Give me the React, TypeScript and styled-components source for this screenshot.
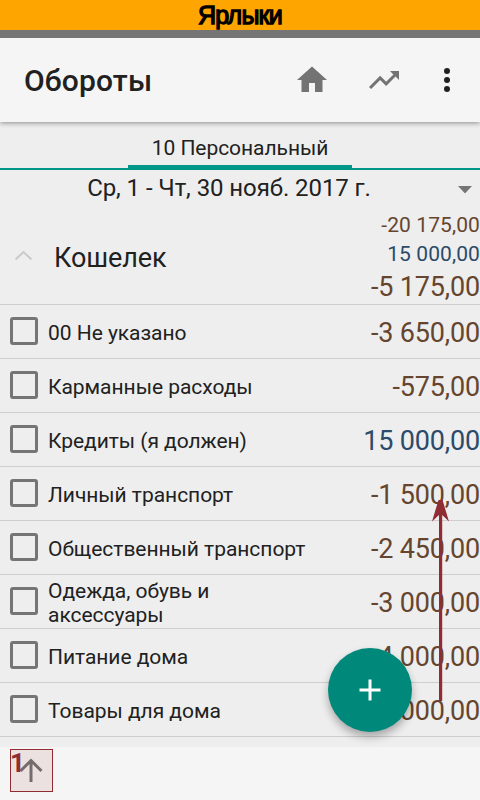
import React from "react";
import styled, { createGlobalStyle } from "styled-components";

const GlobalStyle = createGlobalStyle`
  * { box-sizing: border-box; }
  body { margin: 0; background: #f5f5f5; }
`;

const Screen = styled.div`
  position: relative;
  display: flex;
  flex-direction: column;
  width: 480px;
  height: 800px;
  overflow: hidden;
  background: #f5f5f5;
  color: #212121;
  font-family: Roboto, "Noto Sans", sans-serif;
`;

const Banner = styled.div`
  flex: none;
  height: 30px;
  background: #ffa500;
  color: #000;
  text-align: center;
  font: 25px/31px "Liberation Sans", Arial, sans-serif;
  letter-spacing: -0.8px;
  -webkit-text-stroke: 1.3px #000;
`;

const StatusBar = styled.div`
  flex: none;
  position: relative;
  z-index: 2;
  height: 8px;
  background: #757575;
`;

const Toolbar = styled.header`
  flex: none;
  position: relative;
  z-index: 1;
  display: flex;
  align-items: center;
  height: 84px;
  padding: 0 15px 0 24px;
  background: #f5f5f5;
  box-shadow: 0 1px 5px rgba(0, 0, 0, 0.42);
`;

const Title = styled.h1`
  flex: 1;
  margin: 0;
  padding-top: 1px;
  font-size: 30px;
  line-height: 36px;
  font-weight: 500;
  letter-spacing: 0.15px;
`;

const Action = styled.button<{ $gap?: number }>`
  display: flex;
  padding: 0;
  margin-left: ${(p) => p.$gap ?? 0}px;
  border: 0;
  background: none;
  color: #737373;
`;

const Content = styled.main`
  flex: none;
  height: 625px;
  background: #eeeeee;
`;

const Tabs = styled.nav`
  display: flex;
  justify-content: center;
  height: 48px;
  border-bottom: 2px solid #009688;
`;

const Tab = styled.div`
  width: 224px;
  height: 48px;
  padding-top: 14px;
  border-bottom: 5px solid #009688;
  text-align: center;
  font-size: 21px;
  line-height: 24px;
  letter-spacing: -0.05px;
`;

const Period = styled.div`
  display: flex;
  align-items: center;
  height: 37px;
  padding: 0 8px 0 0;
  font-size: 24px;
  line-height: 36px;
`;

const PeriodText = styled.span`
  flex: 1;
  padding-bottom: 2px;
  text-align: center;
  letter-spacing: -0.08px;
`;

const Caret = styled.svg`
  margin-top: 2px;
`;

const Group = styled.div`
  display: flex;
  align-items: center;
  height: 98px;
  padding-left: 14px;
  border-bottom: 1px solid #cecece;
`;

const GroupName = styled.div`
  flex: 1;
  padding: 5px 0 0 20px;
  font-size: 27px;
  line-height: 32px;
  letter-spacing: -0.1px;
`;

const Totals = styled.div`
  display: flex;
  flex-direction: column;
  align-items: flex-end;
  align-self: flex-start;
  padding-top: 4px;
`;

const Amount = styled.span<{ $income?: boolean; $small?: boolean }>`
  color: ${(p) => (p.$income ? "#2c4a69" : "#66452f")};
  font-size: ${(p) => (p.$small ? 21 : 27)}px;
  line-height: ${(p) => (p.$small ? 29 : 36)}px;
  letter-spacing: ${(p) => (p.$small ? 0.1 : -0.17)}px;
  white-space: nowrap;
`;

const Row = styled.label`
  display: flex;
  align-items: center;
  height: 54px;
  padding-left: 10px;
  border-bottom: 1px solid #cecece;
`;

const Checkbox = styled.span`
  flex: none;
  width: 28px;
  height: 28px;
  margin: 0 10px 2px 0;
  border: 3px solid #757575;
  border-radius: 3px;
`;

const Label = styled.span<{ $wide?: boolean }>`
  flex: 1;
  padding-top: 3px;
  padding-right: ${(p) => (p.$wide ? 0 : 100)}px;
  font-size: 21px;
  line-height: 24px;
  letter-spacing: -0.04px;
`;

const RowAmount = styled(Amount)`
  padding-top: 3px;
`;

const Fab = styled.button`
  position: absolute;
  left: 328px;
  top: 648px;
  display: flex;
  align-items: center;
  justify-content: center;
  width: 84px;
  height: 84px;
  padding: 0;
  border: 0;
  border-radius: 50%;
  background: #00897b;
  box-shadow: 0 5px 8px rgba(0, 0, 0, 0.3);
`;

const SwipeArrow = styled.svg`
  position: absolute;
  left: 430px;
  top: 498px;
`;

const Footer = styled.footer`
  padding: 2px 10px;
`;

const UpButton = styled.button`
  position: relative;
  display: block;
  width: 43px;
  height: 43px;
  padding: 0;
  border: 1px solid #8f2d33;
  background: #ece1e1;

  svg {
    display: block;
  }
`;

const Marker = styled.span`
  position: absolute;
  left: -1px;
  top: -2px;
  color: #8f2d33;
  font: bold 26px/30px Roboto, sans-serif;
`;

const rows = [
  { label: "00 Не указано", amount: "-3 650,00" },
  { label: "Карманные расходы", amount: "-575,00" },
  { label: "Кредиты (я должен)", amount: "15 000,00", income: true },
  { label: "Личный транспорт", amount: "-1 500,00" },
  { label: "Общественный транспорт", amount: "-2 450,00", wide: true },
  { label: "Одежда, обувь и аксессуары", amount: "-3 000,00" },
  { label: "Питание дома", amount: "-4 000,00" },
  { label: "Товары для дома", amount: "-5 000,00" },
];

export default function App() {
  return (
    <Screen>
      <GlobalStyle />
      <Banner>Ярлыки</Banner>
      <StatusBar />
      <Toolbar>
        <Title>Обороты</Title>
        <Action aria-label="Домой">
          <svg width="36" height="36" viewBox="0 0 24 24" fill="currentColor">
            <path d="M10 20v-6h4v6h5v-8h3L12 3 2 12h3v8z" />
          </svg>
        </Action>
        <Action aria-label="График" $gap={36}>
          <svg width="36" height="36" viewBox="0 0 24 24" fill="currentColor">
            <path d="M16 6l2.29 2.29-4.88 4.88-4-4L2 16.59 3.41 18l6-6 4 4 6.3-6.29L22 12V6z" />
          </svg>
        </Action>
        <Action aria-label="Меню" $gap={27}>
          <svg width="36" height="36" viewBox="0 0 36 36" fill="#212121">
            <circle cx="18" cy="9" r="3" />
            <circle cx="18" cy="18" r="3" />
            <circle cx="18" cy="27" r="3" />
          </svg>
        </Action>
      </Toolbar>
      <Content>
        <Tabs>
          <Tab>10 Персональный</Tab>
        </Tabs>
        <Period>
          <PeriodText>Ср, 1 - Чт, 30 нояб. 2017 г.</PeriodText>
          <Caret width="14" height="8" viewBox="0 0 14 8">
            <path d="M0 0h14L7 7.5z" fill="#757575" />
          </Caret>
        </Period>
        <Group>
          <svg width="20" height="12" viewBox="0 0 20 12">
            <path d="M1.5 9.5l8-7.5 8 7.5" fill="none" stroke="#cacaca" strokeWidth="2" />
          </svg>
          <GroupName>Кошелек</GroupName>
          <Totals>
            <Amount $small>-20 175,00</Amount>
            <Amount $small $income>15 000,00</Amount>
            <Amount>-5 175,00</Amount>
          </Totals>
        </Group>
        {rows.map((r) => (
          <Row key={r.label}>
            <Checkbox />
            <Label $wide={r.wide}>{r.label}</Label>
            <RowAmount $income={r.income}>{r.amount}</RowAmount>
          </Row>
        ))}
      </Content>
      <Footer>
        <UpButton aria-label="Вверх">
          <Marker>1</Marker>
          <svg width="41" height="41" viewBox="0 0 41 41" fill="none" stroke="#756c6c" strokeWidth="3">
            <path d="M20 32V11M9.5 21L20 10.5 30.5 21" />
          </svg>
        </UpButton>
      </Footer>
      <Fab aria-label="Добавить">
        <svg width="22" height="22" viewBox="0 0 22 22" stroke="#fff" strokeWidth="3">
          <path d="M11 0.5v21M0.5 11h21" />
        </svg>
      </Fab>
      <SwipeArrow width="21" height="204" viewBox="0 0 21 204" fill="#8f2d33">
        <path d="M8.5 2h4L19 23.5 12.2 17v186H9V17L2 23.5z" />
      </SwipeArrow>
    </Screen>
  );
}
